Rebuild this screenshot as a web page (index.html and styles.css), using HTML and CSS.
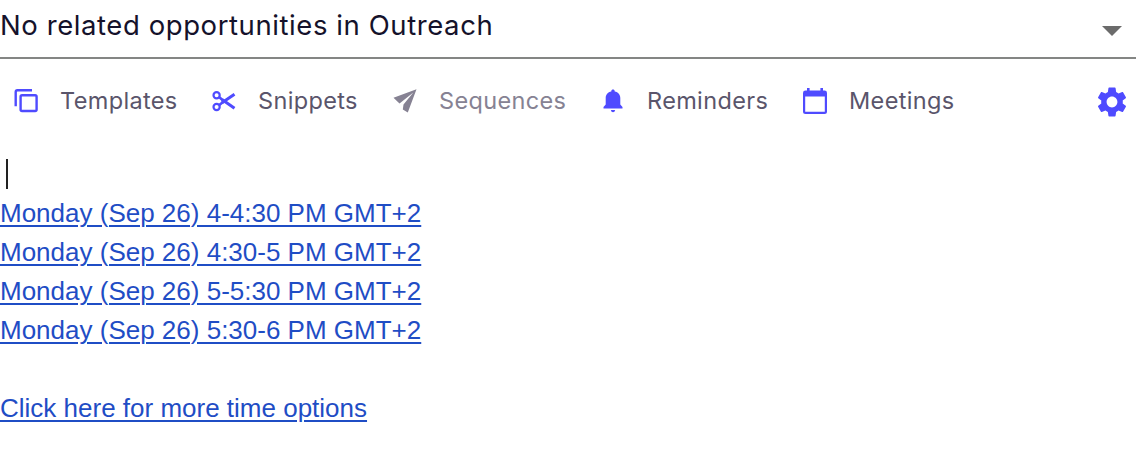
FILE: index.html
```html
<!DOCTYPE html>
<html lang="en">

<head>
  <meta charset="UTF-8">
  <meta name="viewport" content="width=device-width, initial-scale=1.0">
  <title>Outreach</title>
  <link rel="stylesheet" href="styles.css">
</head>

<body>
  <div class="compose">
    <!-- Opportunity select -->
    <div class="opportunity">
      <span class="opportunity-label">No related opportunities in Outreach</span>
      <svg class="arrow" width="20" height="10" viewBox="0 0 20 10"><path d="M0 0h20L10 10z"/></svg>
    </div>

    <!-- Toolbar -->
    <div class="toolbar">
      <a class="tool templates">
        <svg width="24" height="24" viewBox="0 0 24 24" fill="none" stroke="currentColor" stroke-width="2.4">
          <path d="M1.700 17.200V3q0-1.700 1.700-1.700H18"/>
          <rect x="6.600" y="6.200" width="16" height="15.800" rx="1.500"/>
        </svg>
        <span>Templates</span>
      </a>
      <a class="tool snippets">
        <svg width="24" height="24" viewBox="0 0 24 24" fill="none" stroke="currentColor">
          <circle cx="4.600" cy="6.300" r="3.100" stroke-width="2.200"/>
          <circle cx="4.600" cy="18" r="3.100" stroke-width="2.200"/>
          <path d="M7 8l5 4.200M7 16.200l5-4" stroke-width="2.600"/>
          <path d="M10 10.500l12.500 8.700M10 13.800L22.500 5.200" stroke-width="3"/>
        </svg>
        <span>Snippets</span>
      </a>
      <a class="tool sequences disabled">
        <svg width="24" height="24" viewBox="0 0 24 24" fill="currentColor">
          <path d="M23.500.200L.500 8.800l6 5.800L20.300 3.500 10.500 15.500 9.800 20.500l5 3z"/>
        </svg>
        <span>Sequences</span>
      </a>
      <a class="tool reminders">
        <svg width="20" height="24" viewBox="0 0 20 24" fill="currentColor">
          <path d="M10 .500c1 0 1.700.7 1.700 1.500v.5c3.600.7 5.600 3.300 5.600 6.500v6.500l2.200 2.600v1.500H.500v-1.500l2.200-2.600V9c0-3.200 2-5.800 5.600-6.500V2c0-.8.7-1.500 1.700-1.500z"/>
          <path d="M7.800 21h4.400q-.4 2.200-2.200 2.200T7.800 21z"/>
        </svg>
        <span>Reminders</span>
      </a>
      <a class="tool meetings">
        <svg width="24" height="26" viewBox="0 0 24 26" fill="currentColor">
          <path d="M4 0h2.600v2.600h10.800V0H20v2.600h1.500q2.500 0 2.500 2.400v18.500q0 2.500-2.500 2.500h-19Q0 26 0 23.500V5q0-2.400 2.500-2.400H4zM2.200 8.500v15.300h19.600V8.500z" fill-rule="evenodd"/>
        </svg>
        <span>Meetings</span>
      </a>
      <svg class="settings" width="36" height="36" viewBox="0 0 24 24" fill="currentColor">
        <path d="M19.140 12.940c.04-.3.060-.61.060-.94 0-.32-.02-.64-.07-.94l2.030-1.580c.18-.14.230-.41.120-.61l-1.920-3.320c-.12-.22-.37-.29-.59-.22l-2.390.96c-.5-.38-1.030-.7-1.620-.94l-.36-2.540c-.04-.24-.24-.41-.48-.41h-3.840c-.24 0-.43.17-.47.41l-.36 2.540c-.59.24-1.130.57-1.620.94l-2.390-.96c-.22-.08-.47 0-.59.22L2.740 8.870c-.12.210-.08.470.12.610l2.030 1.580c-.05.3-.09.63-.09.94s.02.640.07.940l-2.030 1.580c-.18.140-.23.410-.12.610l1.920 3.320c.12.220.37.290.59.220l2.390-.96c.5.380 1.030.7 1.620.94l.36 2.540c.05.240.24.410.48.410h3.840c.24 0 .44-.17.470-.41l.36-2.540c.59-.24 1.130-.56 1.620-.94l2.390.96c.22.080.47 0 .59-.22l1.920-3.320c.12-.22.070-.47-.12-.61zM12 15.600c-1.980 0-3.600-1.620-3.600-3.600s1.620-3.600 3.600-3.600 3.600 1.620 3.600 3.600-1.620 3.600-3.600 3.600z"/>
      </svg>
    </div>

    <!-- Message body -->
    <div class="message">
      <div class="line"><span class="caret"></span></div>
      <div class="line"><a href="#">Monday (Sep 26) 4-4:30 PM GMT+2</a></div>
      <div class="line"><a href="#">Monday (Sep 26) 4:30-5 PM GMT+2</a></div>
      <div class="line"><a href="#">Monday (Sep 26) 5-5:30 PM GMT+2</a></div>
      <div class="line"><a href="#">Monday (Sep 26) 5:30-6 PM GMT+2</a></div>
      <div class="line"></div>
      <div class="line"><a href="#">Click here for more time options</a></div>
    </div>
  </div>
</body>

</html>
```
FILE: styles.css
```css
body {
  margin: 0;
  background-color: #fff;
  font-family: Inter, "Liberation Sans", sans-serif;
  overflow: hidden;
}

.compose {
  width: 1136px;
}

.opportunity {
  display: flex;
  align-items: center;
  justify-content: space-between;
  box-sizing: border-box;
  height: 59px;
  padding: 0 14px 7px 0;
  border-bottom: 2px solid #848684;
  color: #15122b;
}

.opportunity-label {
  font-size: 27.5px;
  letter-spacing: 0.58px;
  white-space: nowrap;
}

.arrow {
  fill: #6b6b6b;
  margin-top: 12px;
}

.toolbar {
  display: flex;
  align-items: center;
  height: 84px;
  padding: 0 6px 0 14px;
  color: #4f4bff;
}

.tool {
  display: flex;
  align-items: center;
  flex: none;
}

.tool span {
  margin-bottom: 2px;
  color: #5a556b;
  font-size: 23.5px;
  letter-spacing: 0.35px;
}

.templates {
  width: 198px;
  gap: 22px;
}

.snippets {
  width: 181px;
  gap: 22px;
}

.sequences {
  width: 210px;
  gap: 22px;
}

.reminders {
  width: 200px;
  gap: 24px;
}

.meetings {
  gap: 22px;
}

.tool.disabled,
.disabled span {
  color: #868293;
}

.settings {
  margin: 2px 0 0 auto;
}

.message {
  padding-top: 12px;
  font-family: Arial, "Liberation Sans", sans-serif;
  font-size: 26px;
}

.line {
  height: 39px;
  line-height: 39px;
  white-space: nowrap;
}

.line a {
  color: #1f4dc5;
  text-decoration-thickness: 2px;
  text-underline-offset: 3px;
}

.caret {
  display: block;
  width: 2px;
  height: 30px;
  margin-left: 6px;
  background-color: #222;
  position: relative;
  top: 4px;
}
```
